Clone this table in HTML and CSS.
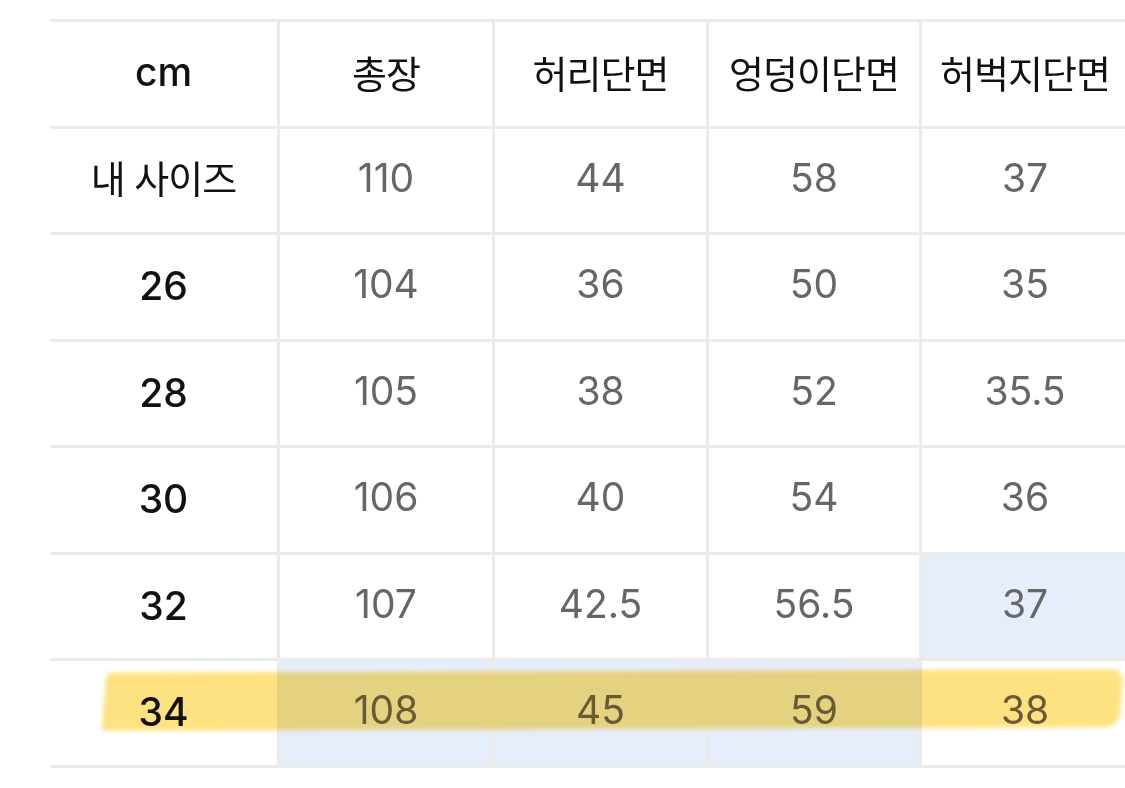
FILE: index.html
```html
<!DOCTYPE html>
<html lang="ko">
<head>
<meta charset="utf-8">
<title>사이즈 표</title>
<link rel="stylesheet" href="styles.css">
</head>
<body>
<div class="page">
  <div class="size-table">
    <div class="cell head latin">cm</div>
    <div class="cell head">총장</div>
    <div class="cell head">허리단면</div>
    <div class="cell head">엉덩이단면</div>
    <div class="cell head last">허벅지단면</div>

    <div class="cell label kor">내 사이즈</div>
    <div class="cell val">110</div>
    <div class="cell val">44</div>
    <div class="cell val">58</div>
    <div class="cell val last">37</div>

    <div class="cell label">26</div>
    <div class="cell val">104</div>
    <div class="cell val">36</div>
    <div class="cell val">50</div>
    <div class="cell val last">35</div>

    <div class="cell label">28</div>
    <div class="cell val">105</div>
    <div class="cell val">38</div>
    <div class="cell val">52</div>
    <div class="cell val last">35.5</div>

    <div class="cell label">30</div>
    <div class="cell val">106</div>
    <div class="cell val">40</div>
    <div class="cell val">54</div>
    <div class="cell val last">36</div>

    <div class="cell label">32</div>
    <div class="cell val">107</div>
    <div class="cell val">42.5</div>
    <div class="cell val">56.5</div>
    <div class="cell val last blue">37</div>

    <div class="cell label">34</div>
    <div class="cell val blue">108</div>
    <div class="cell val blue">45</div>
    <div class="cell val blue">59</div>
    <div class="cell val last">38</div>

    <div class="highlight"></div>
  </div>
</div>
</body>
</html>
```

FILE: styles.css
```css
html, body {
  margin: 0;
  padding: 0;
  background: #ffffff;
  overflow: hidden;
}

.page {
  width: 1125px;
  height: 788px;
  overflow: hidden;
  padding: 19px 0 0 50px;
  box-sizing: border-box;
}

.size-table {
  position: relative;
  display: grid;
  grid-template-columns: 230px 215px 214px 213px 206px;
  grid-auto-rows: 106.5px;
  width: 1078px;
  border-top: 3px solid #ebebeb;
  font-family: "Inter", "Noto Sans CJK KR", "Noto Sans", sans-serif;
}

.cell {
  display: flex;
  align-items: center;
  justify-content: center;
  box-sizing: border-box;
  border-right: 3px solid #ebebeb;
  border-bottom: 3px solid #ebebeb;
  font-size: 39px;
  line-height: 1;
  white-space: nowrap;
}

.cell.last {
  border-right: none;
}

.head {
  color: #111111;
  font-weight: 400;
  font-family: "Noto Sans CJK KR", "Inter", sans-serif;
  font-size: 38px;
  letter-spacing: -1px;
  padding-bottom: 4px;
}

.head.latin {
  font-family: "Inter", sans-serif;
  font-weight: 500;
  font-size: 39px;
  letter-spacing: 0;
}

.label {
  color: #111111;
  font-weight: 500;
  padding-bottom: 2px;
}

.label.kor {
  font-family: "Noto Sans CJK KR", sans-serif;
  font-weight: 400;
  font-size: 38px;
  letter-spacing: -1px;
  padding-bottom: 6px;
}

.val {
  color: #666666;
  font-weight: 400;
  padding-bottom: 6px;
}

.blue {
  background: #e6edfb;
}

.highlight {
  position: absolute;
  left: 54px;
  top: 649px;
  width: 1017px;
  height: 58px;
  background: #fedf74;
  mix-blend-mode: multiply;
  opacity: 0.9;
  border-radius: 6px 12px 14px 4px;
  transform: skewX(-5deg) rotate(-0.2deg);
  filter: blur(2px);
  pointer-events: none;
}
```
